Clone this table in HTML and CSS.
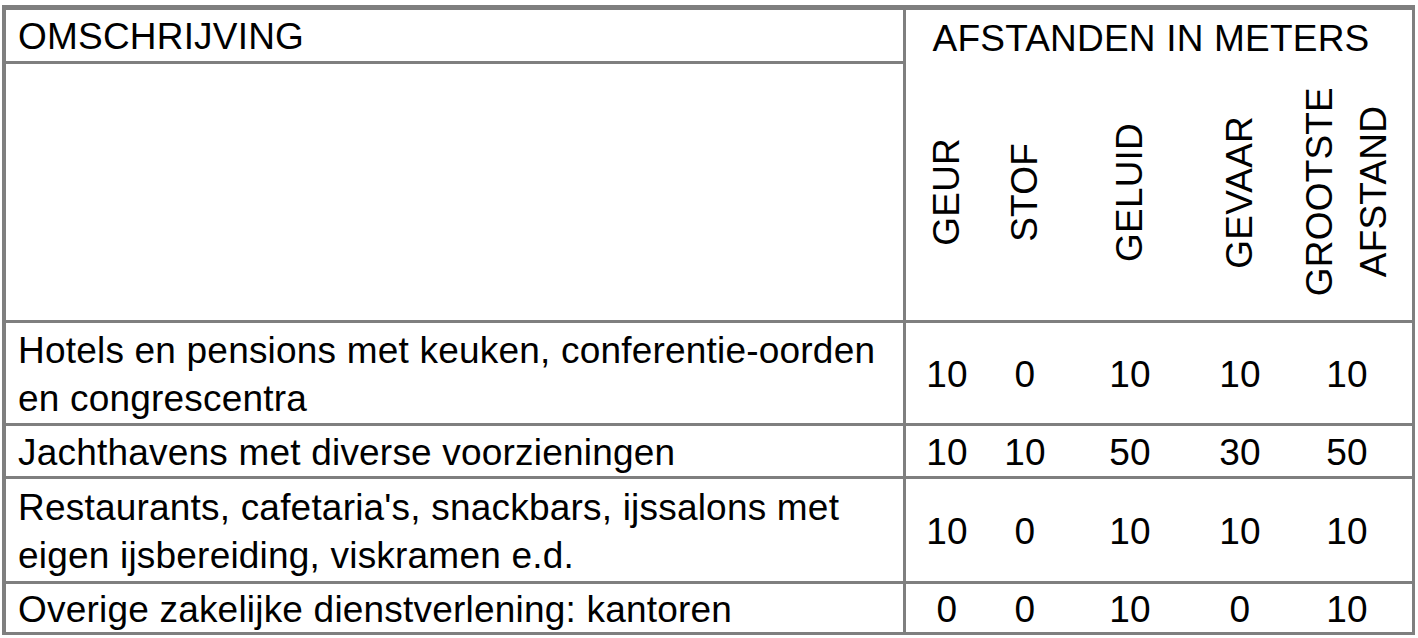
FILE: index.html
```html
<!DOCTYPE html>
<html lang="nl">
<head>
<meta charset="utf-8">
<title>Afstanden</title>
<link rel="stylesheet" href="styles.css">
</head>
<body>
<table class="dist">
  <colgroup>
    <col class="c-desc">
    <col class="c-geur">
    <col class="c-stof">
    <col class="c-geluid">
    <col class="c-gevaar">
    <col class="c-groot">
  </colgroup>
  <tr class="r-head1">
    <th class="desc">OMSCHRIJVING</th>
    <th class="group" colspan="5">AFSTANDEN IN METERS</th>
  </tr>
  <tr class="r-head2">
    <td class="desc"></td>
    <th class="vert"><div class="vbox"><span class="vlabel">GEUR</span></div></th>
    <th class="vert"><div class="vbox"><span class="vlabel">STOF</span></div></th>
    <th class="vert"><div class="vbox"><span class="vlabel">GELUID</span></div></th>
    <th class="vert"><div class="vbox"><span class="vlabel">GEVAAR</span></div></th>
    <th class="vert"><div class="vbox"><span class="vlabel">GROOTSTE<br>AFSTAND</span></div></th>
  </tr>
  <tr class="r-data r1">
    <td class="desc">Hotels en pensions met keuken, conferentie-oorden<br>en congrescentra</td>
    <td class="num">10</td>
    <td class="num">0</td>
    <td class="num">10</td>
    <td class="num">10</td>
    <td class="num">10</td>
  </tr>
  <tr class="r-data r2">
    <td class="desc">Jachthavens met diverse voorzieningen</td>
    <td class="num">10</td>
    <td class="num">10</td>
    <td class="num">50</td>
    <td class="num">30</td>
    <td class="num">50</td>
  </tr>
  <tr class="r-data r3">
    <td class="desc">Restaurants, cafetaria's, snackbars, ijssalons met<br>eigen ijsbereiding, viskramen e.d.</td>
    <td class="num">10</td>
    <td class="num">0</td>
    <td class="num">10</td>
    <td class="num">10</td>
    <td class="num">10</td>
  </tr>
  <tr class="r-data r4 last">
    <td class="desc">Overige zakelijke dienstverlening: kantoren</td>
    <td class="num">0</td>
    <td class="num">0</td>
    <td class="num">10</td>
    <td class="num">0</td>
    <td class="num">10</td>
  </tr>
</table>
</body>
</html>
```

FILE: styles.css
```css
html, body {
  margin: 0;
  padding: 0;
  background: #ffffff;
}

body {
  padding: 5px 0 0 2px;
  font-family: "Liberation Sans", Arial, sans-serif;
  font-size: 37px;
  letter-spacing: 0.2px;
  color: #000000;
}

.dist {
  width: 1413px;
  table-layout: fixed;
  border-collapse: separate;
  border-spacing: 0;
  border-style: solid;
  border-color: #7f7f7f;
  border-width: 5px 3px 3px 4px;
}

.c-desc { width: 900px; }
.c-geur { width: 82px; }
.c-stof { width: 74px; }
.c-geluid { width: 136px; }
.c-gevaar { width: 84px; }
.c-groot { width: 130px; }

.dist th,
.dist td {
  padding: 0;
  font-weight: normal;
  vertical-align: middle;
}

.desc {
  text-align: left;
  padding-left: 12px !important;
  border-right: 3px solid #7f7f7f;
  border-bottom: 3px solid #7f7f7f;
  white-space: nowrap;
}

.r-head1 th {
  line-height: 48px;
  padding-top: 3px;
}

.group {
  text-align: center;
  padding-right: 16px !important;
}

.r-head2 td,
.r-head2 th {
  height: 256px;
  border-bottom: 3px solid #7f7f7f;
}

.vbox {
  height: 256px;
  display: flex;
  align-items: center;
  justify-content: center;
}

.vlabel {
  display: block;
  writing-mode: vertical-rl;
  transform: rotate(180deg);
  text-align: center;
  line-height: 54px;
}

.num {
  text-align: center;
  border-bottom: 3px solid #7f7f7f;
}

.r1 td {
  line-height: 48px;
  padding-top: 4px;
}

.r2 td {
  line-height: 47px;
  padding-top: 3px;
}

.r3 td {
  line-height: 48px;
  padding-top: 5px;
  padding-bottom: 1px;
}

.r4 td {
  line-height: 44px;
  padding-top: 4px;
  border-bottom: 0;
}
```
